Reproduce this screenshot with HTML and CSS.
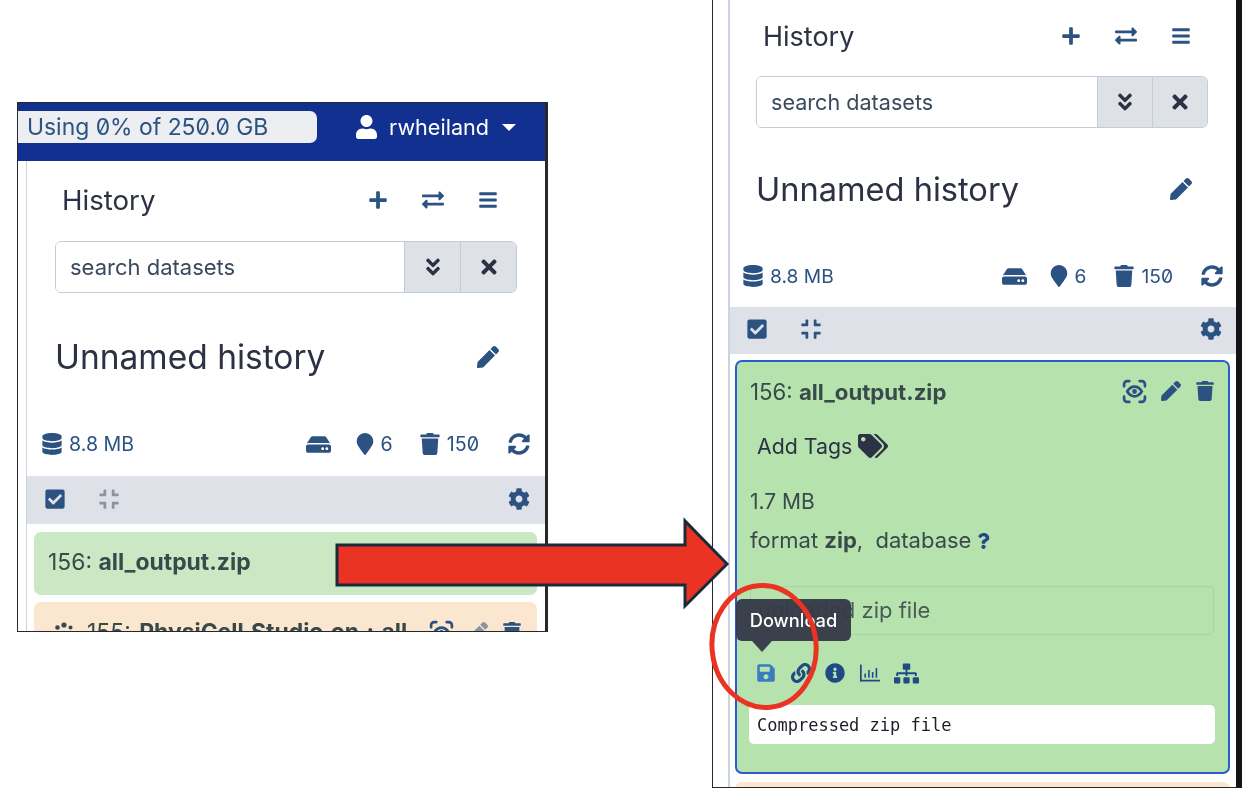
FILE: index.html
```html
<!DOCTYPE html>
<html>

<head>
  <title>Downloading a history dataset</title>
  <link rel="stylesheet" href="styles.css">
</head>

<body>
  <svg class="defs" xmlns="http://www.w3.org/2000/svg">
    <symbol id="i-user" viewBox="0 0 448 512"><path d="M224 256c70.7 0 128-57.3 128-128S294.7 0 224 0 96 57.3 96 128s57.3 128 128 128zm89.6 32h-16.7c-22.2 10.2-46.9 16-72.9 16s-50.6-5.8-72.9-16h-16.7C60.2 288 0 348.2 0 422.4V464c0 26.5 21.5 48 48 48h352c26.5 0 48-21.5 48-48v-41.6c0-74.2-60.2-134.4-134.4-134.4z"/></symbol>
    <symbol id="i-plus" viewBox="0 0 448 512"><path d="M416 208H272V64c0-17.67-14.33-32-32-32h-32c-17.67 0-32 14.33-32 32v144H32c-17.67 0-32 14.33-32 32v32c0 17.67 14.33 32 32 32h144v144c0 17.67 14.33 32 32 32h32c17.67 0 32-14.33 32-32V304h144c17.67 0 32-14.33 32-32v-32c0-17.67-14.33-32-32-32z"/></symbol>
    <symbol id="i-exchange" viewBox="0 0 512 512"><path d="M0 168v-16c0-13.255 10.745-24 24-24h360V80c0-21.367 25.899-32.042 40.971-16.971l80 80c9.372 9.373 9.372 24.569 0 33.941l-80 80C409.956 271.982 384 261.456 384 240v-48H24c-13.255 0-24-10.745-24-24zm488 152H128v-48c0-21.314-25.862-32.08-40.971-16.971l-80 80c-9.372 9.373-9.372 24.569 0 33.941l80 80C102.057 463.997 128 453.437 128 432v-48h360c13.255 0 24-10.745 24-24v-16c0-13.255-10.745-24-24-24z"/></symbol>
    <symbol id="i-bars" viewBox="0 0 448 512"><path d="M16 132h416c8.837 0 16-7.163 16-16V76c0-8.837-7.163-16-16-16H16C7.163 60 0 67.163 0 76v40c0 8.837 7.163 16 16 16zm0 160h416c8.837 0 16-7.163 16-16v-40c0-8.837-7.163-16-16-16H16c-8.837 0-16 7.163-16 16v40c0 8.837 7.163 16 16 16zm0 160h416c8.837 0 16-7.163 16-16v-40c0-8.837-7.163-16-16-16H16c-8.837 0-16 7.163-16 16v40c0 8.837 7.163 16 16 16z"/></symbol>
    <symbol id="i-double" viewBox="0 0 320 512"><path d="M143 256.3L7 120.3c-9.4-9.4-9.4-24.6 0-33.9l22.6-22.6c9.4-9.4 24.6-9.4 33.9 0l96.4 96.4 96.4-96.4c9.4-9.4 24.6-9.4 33.9 0L313 86.3c9.4 9.4 9.4 24.6 0 33.9l-136 136c-9.4 9.5-24.6 9.5-34 .1zm34 192l136-136c9.4-9.4 9.4-24.6 0-33.9l-22.6-22.6c-9.4-9.4-24.6-9.4-33.9 0L160 352.1l-96.4-96.4c-9.4-9.4-24.6-9.4-33.9 0L7 278.3c-9.4 9.4-9.4 24.6 0 33.9l136 136c9.4 9.5 24.6 9.5 34 .1z"/></symbol>
    <symbol id="i-times" viewBox="0 0 352 512"><path d="M242.72 256l100.07-100.07c12.28-12.28 12.28-32.19 0-44.48l-22.24-22.24c-12.28-12.28-32.19-12.28-44.48 0L176 189.28 75.93 89.21c-12.28-12.28-32.19-12.28-44.48 0L9.21 111.45c-12.28 12.28-12.28 32.19 0 44.48L109.28 256 9.21 356.07c-12.28 12.28-12.28 32.19 0 44.48l22.24 22.24c12.28 12.28 32.2 12.28 44.48 0L176 322.72l100.07 100.07c12.28 12.28 32.2 12.28 44.48 0l22.24-22.24c12.28-12.28 12.28-32.19 0-44.48L242.72 256z"/></symbol>
    <symbol id="i-pen" viewBox="0 0 512 512"><path d="M290.74 93.24l128.02 128.02-277.99 277.99-114.14 12.6C11.35 513.54-1.56 500.62.14 485.34l12.7-114.22 277.9-277.88zm207.2-19.06l-60.11-60.11c-18.75-18.75-49.16-18.75-67.91 0l-56.55 56.55 128.02 128.02 56.55-56.55c18.75-18.76 18.75-49.16 0-67.91z"/></symbol>
    <symbol id="i-database" viewBox="0 0 448 512"><path d="M448 73.143v45.714C448 159.143 347.667 192 224 192S0 159.143 0 118.857V73.143C0 32.857 100.333 0 224 0s224 32.857 224 73.143zM448 176v102.857C448 319.143 347.667 352 224 352S0 319.143 0 278.857V176c48.125 33.143 136.208 48.572 224 48.572S399.874 209.143 448 176zm0 160v102.857C448 479.143 347.667 512 224 512S0 479.143 0 438.857V336c48.125 33.143 136.208 48.572 224 48.572S399.874 369.143 448 336z"/></symbol>
    <symbol id="i-hdd" viewBox="0 0 576 512"><path d="M576 304v96c0 26.51-21.49 48-48 48H48c-26.51 0-48-21.49-48-48v-96c0-26.51 21.49-48 48-48h480c26.51 0 48 21.49 48 48zm-48-80a79.557 79.557 0 0 1 30.777 6.165L462.25 85.374A48.003 48.003 0 0 0 422.311 64H153.689a48 48 0 0 0-39.938 21.374L17.223 230.165A79.557 79.557 0 0 1 48 224h480zm-48 96c-17.673 0-32 14.327-32 32s14.327 32 32 32 32-14.327 32-32-14.327-32-32-32zm-96 0c-17.673 0-32 14.327-32 32s14.327 32 32 32 32-14.327 32-32-14.327-32-32-32z"/></symbol>
    <symbol id="i-marker" viewBox="0 0 384 512"><path d="M172.268 501.67C26.97 291.031 0 269.413 0 192 0 85.961 85.961 0 192 0s192 85.961 192 192c0 77.413-26.97 99.031-172.268 309.67-9.535 13.774-29.93 13.773-39.464 0z"/></symbol>
    <symbol id="i-trash" viewBox="0 0 448 512"><path d="M432 32H312l-9.4-18.7A24 24 0 0 0 281.1 0H166.8a23.72 23.72 0 0 0-21.4 13.3L136 32H16A16 16 0 0 0 0 48v32a16 16 0 0 0 16 16h416a16 16 0 0 0 16-16V48a16 16 0 0 0-16-16zM53.2 467a48 48 0 0 0 47.9 45h245.8a48 48 0 0 0 47.9-45L416 128H32z"/></symbol>
    <symbol id="i-sync" viewBox="0 0 512 512"><path d="M370.72 133.28C339.458 104.008 298.888 87.962 255.848 88c-77.458.068-144.328 53.178-162.791 126.85-1.344 5.363-6.122 9.15-11.651 9.15H24.103c-7.498 0-13.194-6.807-11.807-14.176C33.933 94.924 134.813 8 256 8c66.448 0 126.791 26.136 171.315 68.685L463.03 40.97C478.149 25.851 504 36.559 504 57.941V192c0 13.255-10.745 24-24 24H345.941c-21.382 0-32.09-25.851-16.971-40.971l41.75-41.749zM32 296h134.059c21.382 0 32.09 25.851 16.971 40.971l-41.75 41.75c31.262 29.273 71.835 45.319 114.876 45.28 77.418-.07 144.315-53.144 162.787-126.849 1.344-5.363 6.122-9.15 11.651-9.15h57.304c7.498 0 13.194 6.807 11.807 14.176C478.067 417.076 377.187 504 256 504c-66.448 0-126.791-26.136-171.315-68.685L48.97 471.03C33.851 486.149 8 475.441 8 454.059V320c0-13.255 10.745-24 24-24z"/></symbol>
    <symbol id="i-check" viewBox="0 0 448 512"><path d="M400 480H48c-26.51 0-48-21.49-48-48V80c0-26.51 21.49-48 48-48h352c26.51 0 48 21.49 48 48v352c0 26.51-21.49 48-48 48zm-204.686-98.059l184-184c6.248-6.248 6.248-16.379 0-22.627l-22.627-22.627c-6.248-6.248-16.379-6.249-22.628 0L184 302.745l-70.059-70.059c-6.248-6.248-16.379-6.248-22.628 0l-22.627 22.627c-6.248 6.248-6.248 16.379 0 22.627l104 104c6.249 6.25 16.379 6.25 22.628.001z"/></symbol>
    <symbol id="i-compress" viewBox="0 0 448 512"><path d="M436 192H312c-13.3 0-24-10.7-24-24V44c0-6.6 5.4-12 12-12h40c6.6 0 12 5.4 12 12v84h84c6.6 0 12 5.4 12 12v40c0 6.6-5.4 12-12 12zm-276-24V44c0-6.6-5.4-12-12-12h-40c-6.6 0-12 5.4-12 12v84H12c-6.6 0-12 5.4-12 12v40c0 6.6 5.4 12 12 12h124c13.3 0 24-10.7 24-24zm0 300V344c0-13.3-10.7-24-24-24H12c-6.6 0-12 5.4-12 12v40c0 6.6 5.4 12 12 12h84v84c0 6.6 5.4 12 12 12h40c6.6 0 12-5.4 12-12zm192 0v-84h84c6.6 0 12-5.4 12-12v-40c0-6.6-5.4-12-12-12H312c-13.3 0-24 10.7-24 24v124c0 6.6 5.4 12 12 12h40c6.6 0 12-5.4 12-12z"/></symbol>
    <symbol id="i-cog" viewBox="0 0 512 512"><path d="M487.4 315.7l-42.6-24.6c4.3-23.2 4.3-47 0-70.2l42.6-24.6c4.9-2.8 7.1-8.6 5.5-14-11.1-35.6-30-67.8-54.7-94.6-3.8-4.1-10-5.1-14.8-2.3L380.8 110c-17.9-15.4-38.5-27.3-60.8-35.1V25.8c0-5.6-3.9-10.5-9.4-11.7-36.7-8.2-74.3-7.8-109.2 0-5.5 1.2-9.4 6.1-9.4 11.7V75c-22.2 7.9-42.8 19.8-60.8 35.1L88.7 85.5c-4.9-2.8-11-1.9-14.8 2.3-24.7 26.7-43.6 58.9-54.7 94.6-1.7 5.4.6 11.2 5.5 14L67.3 221c-4.3 23.2-4.3 47 0 70.2l-42.6 24.6c-4.9 2.8-7.1 8.6-5.5 14 11.1 35.6 30 67.8 54.7 94.6 3.8 4.1 10 5.1 14.8 2.3l42.6-24.6c17.9 15.4 38.5 27.3 60.8 35.1v49.2c0 5.6 3.9 10.5 9.4 11.7 36.7 8.2 74.3 7.8 109.2 0 5.5-1.2 9.4-6.1 9.4-11.7v-49.2c22.2-7.9 42.8-19.8 60.8-35.1l42.6 24.6c4.9 2.8 11 1.9 14.8-2.3 24.7-26.7 43.6-58.9 54.7-94.6 1.5-5.5-.7-11.3-5.6-14.1zM256 336c-44.1 0-80-35.9-80-80s35.9-80 80-80 80 35.9 80 80-35.9 80-80 80z"/></symbol>
    <symbol id="i-tags" viewBox="0 0 640 512"><path d="M497.941 225.941L286.059 14.059A48 48 0 0 0 252.118 0H48C21.49 0 0 21.49 0 48v204.118a48 48 0 0 0 14.059 33.941l211.882 211.882c18.744 18.745 49.136 18.746 67.882 0l204.118-204.118c18.745-18.745 18.745-49.137 0-67.882zM112 160c-26.51 0-48-21.49-48-48s21.49-48 48-48 48 21.49 48 48-21.49 48-48 48zm513.941 133.823L421.823 497.941c-18.745 18.745-49.137 18.745-67.882 0l-.36-.36L527.64 323.522c16.999-16.999 26.36-39.6 26.36-63.64s-9.362-46.641-26.36-63.64L331.397 0h48.721a48 48 0 0 1 33.941 14.059l211.882 211.882c18.745 18.745 18.745 49.137 0 67.882z"/></symbol>
    <symbol id="i-save" viewBox="0 0 448 512"><path d="M433.941 129.941l-83.882-83.882A48 48 0 0 0 316.118 32H48C21.49 32 0 53.49 0 80v352c0 26.51 21.49 48 48 48h352c26.51 0 48-21.49 48-48V163.882a48 48 0 0 0-14.059-33.941zM224 416c-35.346 0-64-28.654-64-64 0-35.346 28.654-64 64-64s64 28.654 64 64c0 35.346-28.654 64-64 64zm96-304.52V212c0 6.627-5.373 12-12 12H76c-6.627 0-12-5.373-12-12V108c0-6.627 5.373-12 12-12h228.52c3.183 0 6.235 1.264 8.485 3.515l3.48 3.48A11.996 11.996 0 0 1 320 111.48z"/></symbol>
    <symbol id="i-link" viewBox="0 0 512 512"><path d="M326.612 185.391c59.747 59.809 58.927 155.698.36 214.59-.11.12-.24.25-.36.37l-67.2 67.2c-59.27 59.27-155.699 59.262-214.96 0-59.27-59.26-59.27-155.7 0-214.96l37.106-37.106c9.84-9.84 26.786-3.3 27.294 10.606.648 17.722 3.826 35.527 9.69 52.721 1.986 5.822.567 12.262-3.783 16.612l-13.087 13.087c-28.026 28.026-28.905 73.66-1.155 101.96 28.024 28.579 74.086 28.749 102.325.51l67.2-67.19c28.191-28.191 28.073-73.757 0-101.83-3.701-3.694-7.429-6.564-10.341-8.569a16.037 16.037 0 0 1-6.947-12.606c-.396-10.567 3.348-21.456 11.698-29.806l21.054-21.055c5.521-5.521 14.182-6.199 20.584-1.731a152.482 152.482 0 0 1 20.522 17.197zM467.547 44.449c-59.261-59.262-155.69-59.27-214.96 0l-67.2 67.2c-.12.12-.25.25-.36.37-58.566 58.892-59.387 154.781.36 214.59a152.454 152.454 0 0 0 20.521 17.196c6.402 4.468 15.064 3.789 20.584-1.731l21.054-21.055c8.35-8.35 12.094-19.239 11.698-29.806a16.037 16.037 0 0 0-6.947-12.606c-2.912-2.005-6.64-4.875-10.341-8.569-28.073-28.073-28.191-73.639 0-101.83l67.2-67.19c28.239-28.239 74.3-28.069 102.325.51 27.75 28.3 26.872 73.934-1.155 101.96l-13.087 13.087c-4.35 4.35-5.769 10.79-3.783 16.612 5.864 17.194 9.042 34.999 9.69 52.721.509 13.906 17.454 20.446 27.294 10.606l37.106-37.106c59.271-59.259 59.271-155.699.001-214.959z"/></symbol>
    <symbol id="i-info" viewBox="0 0 512 512"><path d="M256 8C119.043 8 8 119.083 8 256c0 136.997 111.043 248 248 248s248-111.003 248-248C504 119.083 392.957 8 256 8zm0 110c23.196 0 42 18.804 42 42s-18.804 42-42 42-42-18.804-42-42 18.804-42 42-42zm56 254c0 6.627-5.373 12-12 12h-88c-6.627 0-12-5.373-12-12v-24c0-6.627 5.373-12 12-12h12v-64h-12c-6.627 0-12-5.373-12-12v-24c0-6.627 5.373-12 12-12h64c6.627 0 12 5.373 12 12v100h12c6.627 0 12 5.373 12 12v24z"/></symbol>
    <symbol id="i-chart" viewBox="0 0 512 512"><rect x="0" y="40" width="44" height="432" rx="10"/><rect x="0" y="428" width="512" height="44" rx="10"/><rect x="112" y="270" width="40" height="110" rx="8"/><rect x="208" y="180" width="40" height="200" rx="8"/><rect x="304" y="230" width="40" height="150" rx="8"/><rect x="400" y="130" width="40" height="250" rx="8"/></symbol>
    <symbol id="i-sitemap" viewBox="0 0 640 512"><path d="M128 352H32c-17.67 0-32 14.33-32 32v96c0 17.67 14.33 32 32 32h96c17.67 0 32-14.33 32-32v-96c0-17.67-14.33-32-32-32zm-24-80h192v48h48v-48h192v48h48v-57.59c0-21.17-17.23-38.41-38.41-38.41H344v-64h40c17.67 0 32-14.33 32-32V32c0-17.67-14.33-32-32-32H256c-17.67 0-32 14.33-32 32v96c0 17.67 14.33 32 32 32h40v64H94.41C73.23 224 56 241.23 56 262.41V320h48v-48zm264 80h-96c-17.67 0-32 14.33-32 32v96c0 17.67 14.33 32 32 32h96c17.67 0 32-14.33 32-32v-96c0-17.67-14.33-32-32-32zm240 0h-96c-17.67 0-32 14.33-32 32v96c0 17.67 14.33 32 32 32h96c17.67 0 32-14.33 32-32v-96c0-17.67-14.33-32-32-32z"/></symbol>
    <symbol id="i-question" viewBox="0 0 384 512"><path d="M202.021 0C122.202 0 70.503 32.703 29.914 91.026c-7.363 10.58-5.093 25.086 5.178 32.874l43.138 32.709c10.373 7.865 25.132 6.026 33.253-4.148 25.049-31.381 43.63-49.449 82.757-49.449 30.764 0 68.816 19.799 68.816 49.631 0 22.552-18.617 34.134-48.993 51.164-35.423 19.86-82.299 44.576-82.299 106.405V320c0 13.255 10.745 24 24 24h72.471c13.255 0 24-10.745 24-24v-5.773c0-42.86 125.268-44.645 125.268-160.627C377.504 66.256 286.902 0 202.021 0zM192 373.459c-38.196 0-69.271 31.075-69.271 69.271 0 38.195 31.075 69.27 69.271 69.27s69.271-31.075 69.271-69.271-31.075-69.27-69.271-69.27z"/></symbol>
    <symbol id="i-eye" viewBox="0 0 24 24"><g fill="none" stroke="currentColor" stroke-width="2.6" stroke-linecap="round"><path d="M2 7V5a3 3 0 0 1 3-3h2M17 2h2a3 3 0 0 1 3 3v2M22 17v2a3 3 0 0 1-3 3h-2M7 22H5a3 3 0 0 1-3-3v-2"/><path d="M5 12c2-3.200 4.400-4.600 7-4.600s5 1.400 7 4.600c-2 3.200-4.400 4.600-7 4.600S7 15.200 5 12z"/></g><circle cx="12" cy="12" r="2.300" fill="currentColor"/></symbol>
    <symbol id="i-spinner" viewBox="0 0 24 24"><circle cx="12" cy="3" r="2.600"/><circle cx="5.500" cy="5.500" r="2.300"/><circle cx="18.500" cy="5.500" r="2"/><circle cx="3" cy="12" r="2"/><circle cx="21" cy="12" r="2"/></symbol>
  </svg>

  <main class="canvas">

    <section class="shot shot-small">
      <nav class="navbar">
        <div class="quota">Using 0% of 250.0 GB</div>
        <div class="account">
          <svg class="ico ico-user"><use href="#i-user"/></svg>
          <span>rwheiland</span>
          <i class="caret"></i>
        </div>
      </nav>
      <div class="history">
        <div class="head">
          <span class="head-title">History</span>
          <div class="head-icons">
            <svg class="ico"><use href="#i-plus"/></svg>
            <svg class="ico ico-md"><use href="#i-exchange"/></svg>
            <svg class="ico"><use href="#i-bars"/></svg>
          </div>
        </div>
        <div class="search">
          <input class="search-input" placeholder="search datasets">
          <span class="search-btn"><svg class="ico ico-dark"><use href="#i-double"/></svg></span>
          <span class="search-btn"><svg class="ico ico-dark"><use href="#i-times"/></svg></span>
        </div>
        <div class="name-row">
          <h2 class="name">Unnamed history</h2>
          <svg class="ico ico-md"><use href="#i-pen"/></svg>
        </div>
        <div class="stats">
          <span class="stat"><svg class="ico ico-md"><use href="#i-database"/></svg>8.8 MB</span>
          <div class="stat-group">
            <span class="stat stat-hdd"><svg class="ico ico-wide"><use href="#i-hdd"/></svg></span>
            <span class="stat stat-marker"><svg class="ico ico-md"><use href="#i-marker"/></svg>6</span>
            <span class="stat"><svg class="ico ico-md"><use href="#i-trash"/></svg>150</span>
            <span class="stat"><svg class="ico ico-md"><use href="#i-sync"/></svg></span>
          </div>
        </div>
        <div class="toolbar">
          <svg class="ico ico-md"><use href="#i-check"/></svg>
          <svg class="ico ico-md ico-faded"><use href="#i-compress"/></svg>
          <svg class="ico ico-md toolbar-end"><use href="#i-cog"/></svg>
        </div>
        <div class="item item-ok">
          <div class="item-title"><span>156: <b>all_output.zip</b></span></div>
        </div>
        <div class="item item-running">
          <div class="item-title">
            <span class="item-label"><svg class="ico ico-text"><use href="#i-spinner"/></svg>155: <b>PhysiCell Studio on : all</b></span>
            <div class="item-icons">
              <svg class="ico ico-md ico-eye"><use href="#i-eye"/></svg>
              <svg class="ico ico-faded"><use href="#i-pen"/></svg>
              <svg class="ico"><use href="#i-trash"/></svg>
            </div>
          </div>
        </div>
      </div>
    </section>

    <section class="shot shot-large">
      <div class="history">
        <div class="head">
          <span class="head-title">History</span>
          <div class="head-icons">
            <svg class="ico"><use href="#i-plus"/></svg>
            <svg class="ico ico-md"><use href="#i-exchange"/></svg>
            <svg class="ico"><use href="#i-bars"/></svg>
          </div>
        </div>
        <div class="search">
          <input class="search-input" placeholder="search datasets">
          <span class="search-btn"><svg class="ico ico-dark"><use href="#i-double"/></svg></span>
          <span class="search-btn"><svg class="ico ico-dark"><use href="#i-times"/></svg></span>
        </div>
        <div class="name-row">
          <h2 class="name">Unnamed history</h2>
          <svg class="ico ico-md"><use href="#i-pen"/></svg>
        </div>
        <div class="stats">
          <span class="stat"><svg class="ico ico-md"><use href="#i-database"/></svg>8.8 MB</span>
          <div class="stat-group">
            <span class="stat stat-hdd"><svg class="ico ico-wide"><use href="#i-hdd"/></svg></span>
            <span class="stat stat-marker"><svg class="ico ico-md"><use href="#i-marker"/></svg>6</span>
            <span class="stat"><svg class="ico ico-md"><use href="#i-trash"/></svg>150</span>
            <span class="stat"><svg class="ico ico-md"><use href="#i-sync"/></svg></span>
          </div>
        </div>
        <div class="toolbar">
          <svg class="ico ico-md"><use href="#i-check"/></svg>
          <svg class="ico ico-md"><use href="#i-compress"/></svg>
          <svg class="ico ico-md toolbar-end"><use href="#i-cog"/></svg>
        </div>
        <div class="item item-ok item-open">
          <div class="item-title">
            <span>156: <b>all_output.zip</b></span>
            <div class="item-icons">
              <svg class="ico ico-md ico-eye"><use href="#i-eye"/></svg>
              <svg class="ico"><use href="#i-pen"/></svg>
              <svg class="ico"><use href="#i-trash"/></svg>
            </div>
          </div>
          <div class="tags">Add Tags <svg class="ico ico-tags"><use href="#i-tags"/></svg></div>
          <div class="size">1.7 MB</div>
          <div class="format">format <b>zip</b>,&nbsp; database <svg class="ico ico-q"><use href="#i-question"/></svg></div>
          <div class="info-box">uploaded zip file</div>
          <div class="actions">
            <svg class="ico ico-save"><use href="#i-save"/></svg>
            <svg class="ico ico-navy"><use href="#i-link"/></svg>
            <svg class="ico ico-navy"><use href="#i-info"/></svg>
            <svg class="ico ico-navy"><use href="#i-chart"/></svg>
            <svg class="ico ico-navy ico-wide"><use href="#i-sitemap"/></svg>
          </div>
          <pre class="peek">Compressed zip file</pre>
          <div class="tooltip">Download</div>
        </div>
        <div class="item item-running"></div>
      </div>
    </section>

    <svg class="overlay" viewBox="0 0 1258 800" xmlns="http://www.w3.org/2000/svg">
      <polygon class="arrow" points="337,545 685,545 685,521 727,564 685,606 685,585 337,585"/>
      <ellipse class="ring" cx="764" cy="646.500" rx="52" ry="61" transform="rotate(-6 764 646)"/>
    </svg>

  </main>
</body>

</html>
```

FILE: styles.css
```css
body {
  margin: 0;
  background: white;
  font-family: Inter, "Noto Sans", sans-serif;
  font-feature-settings: "zero";
  color: #2c3143;
  overflow: hidden;
}

.defs {
  display: none;
}

.canvas {
  position: relative;
  width: 1258px;
  height: 800px;
}

/* the two pasted screenshots */
.shot {
  position: absolute;
  box-sizing: border-box;
  overflow: hidden;
  background: white;
  border: 1px solid #26282c;
  filter: blur(0.5px);
}

.shot-small {
  left: 17px;
  top: 102px;
  width: 531px;
  height: 530px;
  border-right-width: 3px;
  font-size: 19.6px;
}

.shot-large {
  left: 712px;
  top: -2px;
  width: 530px;
  height: 790px;
  border-top: 0;
  border-right: 6px solid #141416;
  font-size: 19.2px;
}

.navbar {
  display: flex;
  justify-content: space-between;
  align-items: flex-start;
  box-sizing: border-box;
  height: 58px;
  padding: 8px 29px 0 0;
  background: #12308f;
}

.quota {
  width: 290px;
  height: 32px;
  padding-left: 9px;
  line-height: 32px;
  font-size: 22.9px;
  color: #2c5282;
  background: #eceef1;
  border-radius: 0 7px 7px 0;
}

.account {
  display: flex;
  align-items: center;
  height: 32px;
  gap: 12px;
  font-size: 21.6px;
  color: white;
}

.caret {
  margin-left: 1px;
  border-top: 7px solid white;
  border-left: 7px solid transparent;
  border-right: 7px solid transparent;
}

.history {
  margin-left: 8px;
  border-left: 1px solid #c9d3e4;
}

.shot-large .history {
  margin-left: 15px;
  border-left-width: 2px;
}

.ico {
  display: block;
  flex: none;
  width: 20px;
  height: 20px;
  fill: #2c5282;
  color: #2c5282;
}

.ico-md {
  width: 22px;
  height: 22px;
}

.ico-wide {
  width: 25px;
  height: 25px;
}

.ico-dark {
  width: 22px;
  height: 22px;
  fill: #2c3143;
}

.ico-faded {
  fill: #8a93a3;
}

.ico-user {
  width: 21px;
  height: 24px;
  fill: white;
}

.ico-eye {
  width: 25px;
  height: 25px;
}

.ico-tags {
  display: inline-block;
  width: 30px;
  height: 24px;
  margin-bottom: -4px;
  fill: #2c3143;
}

.ico-text {
  display: inline-block;
  width: 24px;
  height: 24px;
  margin-right: 11px;
  margin-bottom: -4px;
  fill: #3b4652;
}

.ico-q {
  display: inline-block;
  width: 15px;
  height: 16px;
  margin: 0 0 -1px -2px;
  fill: #1f4a86;
}

.ico-save {
  fill: #3b7cc0;
}

.ico-navy {
  fill: #1f4a86;
}

.head {
  display: flex;
  justify-content: space-between;
  align-items: center;
  height: 40px;
  padding: 19px 47px 0 35px;
}

.shot-large .head {
  padding: 18px 45px 0 33px;
}

.head-title {
  font-size: 27.6px;
}

.shot-large .head-title {
  font-size: 27px;
}

.head-icons {
  display: flex;
  align-items: center;
  gap: 34px;
}

.search {
  display: flex;
  box-sizing: border-box;
  height: 52px;
  margin: 21px 28px 0 28px;
  border: 1px solid #c3ccd9;
  border-radius: 6px;
  overflow: hidden;
  font-size: 22px;
}

.shot-large .search {
  margin: 20px 28px 0 26px;
  font-size: 21.6px;
}

.search-input {
  flex: 1;
  min-width: 0;
  padding: 0 14px;
  border: 0;
  outline: 0;
  font: inherit;
  font-feature-settings: inherit;
}

.search-input::placeholder {
  color: #3a4a5c;
  opacity: 1;
}

.search-btn {
  display: flex;
  justify-content: center;
  align-items: center;
  width: 55px;
  background: #dee2e6;
  border-left: 1px solid #c3ccd9;
}

.shot-large .search-btn {
  width: 54px;
}

.name-row {
  display: flex;
  justify-content: space-between;
  align-items: center;
  height: 50px;
  margin-top: 39px;
  padding: 0 46px 0 28px;
}

.shot-large .name-row {
  margin-top: 36px;
  padding: 0 44px 0 26px;
}

.name {
  margin: 0;
  font-size: 33.5px;
  font-weight: 400;
}

.shot-large .name {
  font-size: 32.6px;
}

.stats {
  display: flex;
  justify-content: space-between;
  align-items: center;
  height: 24px;
  margin-top: 50px;
  padding: 0 15px 0 14px;
  color: #2c5282;
}

.shot-large .stats {
  padding: 0 13px 0 12px;
}

.stat-group {
  display: flex;
  gap: 29px;
}

.shot-large .stat-group {
  gap: 28px;
}

.stat {
  display: flex;
  align-items: center;
  gap: 6px;
}

.stat-hdd {
  margin-right: -6px;
}

.stat-marker {
  gap: 5px;
  margin-right: -3px;
}

.shot-large .stat-hdd {
  margin-right: -7px;
}

.shot-large .stat-marker {
  margin-right: -1px;
}

.toolbar {
  display: flex;
  align-items: center;
  box-sizing: border-box;
  gap: 32px;
  height: 48px;
  margin-top: 20px;
  padding: 0 15px 3px 17px;
  background: #dee2e8;
}

.shot-large .toolbar {
  height: 47px;
  margin-top: 19px;
  padding: 0 14px 3px 16px;
}

.toolbar-end {
  margin-left: auto;
}

.item {
  margin: 8px 8px 0 7px;
  border-radius: 7px;
  font-size: 22.9px;
}

.item + .item {
  margin-top: 7px;
}

.item-ok {
  background: #c9e8c3;
}

.item-running {
  height: 60px;
  background: #fbe6cf;
  color: #2c3143;
}

.item-title {
  display: flex;
  justify-content: space-between;
  align-items: center;
  box-sizing: border-box;
  height: 63px;
  padding: 0 14px 4px;
  color: #3a4a4a;
}

.item-title b {
  font-weight: 700;
}

.item-running .item-title {
  height: 60px;
  padding: 0 15px 0 18px;
  word-spacing: 2px;
}

.item-label {
  display: flex;
  align-items: center;
  white-space: pre;
}

.item-icons {
  display: flex;
  align-items: center;
  gap: 14px;
}

.item-open {
  position: relative;
  box-sizing: border-box;
  height: 414px;
  margin: 6px 6px 0 5px;
  padding: 0 13px 0 12px;
  font-size: 22.2px;
  background: #b6e2ae;
  border: 2px solid #2a5bd0;
}

.item-open .item-title {
  height: 58px;
  padding: 0 0 0 1px;
}

.item-open + .item-running {
  margin: 8px 6px 0 5px;
  border-radius: 7px 7px 0 0;
}

.tags {
  margin: 12px 0 0 8px;
  line-height: 28px;
  font-size: 21.3px;
}

.size {
  margin: 28px 0 0 1px;
  line-height: 28px;
  font-size: 21px;
  color: #3a4a4a;
}

.format {
  margin: 10px 0 0 1px;
  line-height: 28px;
  font-size: 22px;
  color: #3a4a4a;
}

.info-box {
  box-sizing: border-box;
  height: 49px;
  margin: 32px 1px 0 1px;
  padding-left: 7px;
  line-height: 47px;
  font-size: 22px;
  color: #4a5b56;
  border: 1px solid #a9d3a3;
  border-radius: 5px;
}

.actions {
  display: flex;
  align-items: center;
  gap: 14.5px;
  height: 26px;
  margin-top: 25px;
  padding-left: 7px;
}

.peek {
  height: 39px;
  margin: 19px 0 0 0;
  padding-left: 8px;
  line-height: 40px;
  font-family: "DejaVu Sans Mono", "Liberation Mono", monospace;
  font-size: 17px;
  color: #1c1f26;
  background: white;
  border-radius: 5px;
}

.tooltip {
  position: absolute;
  left: -1px;
  top: 237px;
  width: 115px;
  height: 42px;
  line-height: 42px;
  text-align: center;
  font-size: 18.3px;
  font-weight: 500;
  color: white;
  background: rgba(53, 58, 72, 0.96);
  border-radius: 6px;
}

.tooltip::after {
  content: "";
  position: absolute;
  left: 16px;
  top: 42px;
  border-top: 11px solid rgba(53, 58, 72, 0.96);
  border-left: 10px solid transparent;
  border-right: 10px solid transparent;
}

/* annotations drawn over the screenshots */
.overlay {
  position: absolute;
  left: 0;
  top: 0;
  width: 1258px;
  height: 800px;
  pointer-events: none;
}

.arrow {
  fill: #ea3323;
  stroke: #1b2a3a;
  stroke-width: 3;
}

.ring {
  fill: none;
  stroke: #ea3323;
  stroke-width: 5;
}
```
